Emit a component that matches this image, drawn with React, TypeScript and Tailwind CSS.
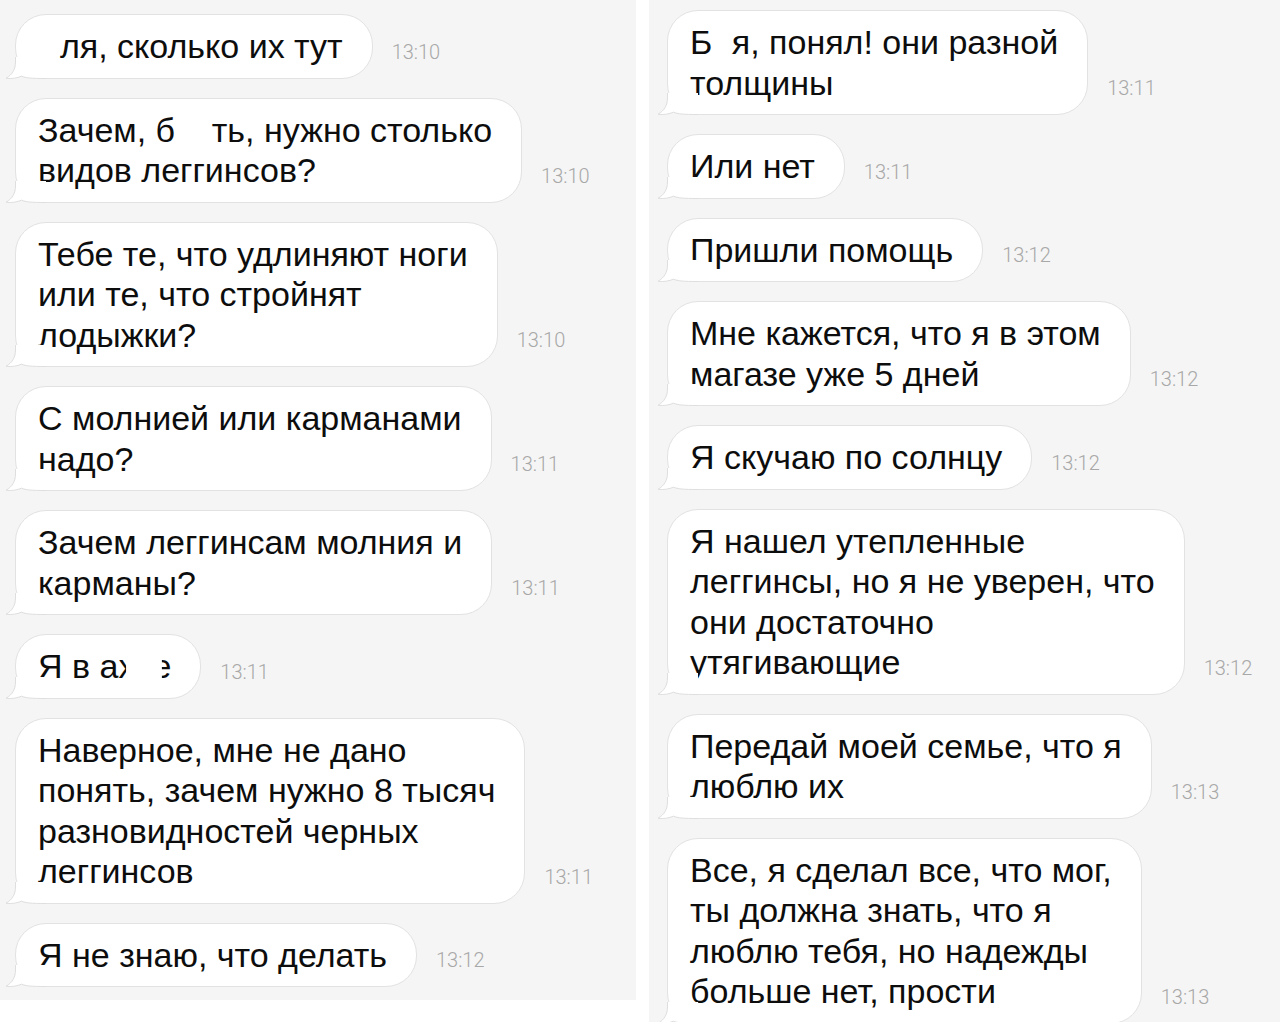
import React from "react";

function Tail() {
  return (
    <svg
      className="absolute left-[-11px] bottom-[-1px]"
      width="41"
      height="22"
      viewBox="0 0 41 22"
      fill="none"
    >
      <path
        d="M10.5 0 L10.5 5 C10.5 12 7.5 17.5 1 21.3 C7 22 12 21 16.5 19.2 C21 21 26 21.5 41 21.5 L41 0 Z"
        fill="#ffffff"
      />
      <path
        d="M10.5 0 L10.5 5 C10.5 12 7.5 17.5 1 21.3 C7 22 12 21 16.5 19.2 C21 21 26 21.5 41 21.5"
        stroke="#dedede"
        strokeWidth="1"
        fill="none"
      />
    </svg>
  );
}

function Bubble({ children, time }: { children: React.ReactNode; time: string }) {
  return (
    <div className="flex items-end">
      <div className="relative bg-white border border-[#e2e2e2] rounded-[31px] pl-[22px] pr-[29px] py-[11px] text-[34px] leading-[40.5px] text-[#0d0d0d] whitespace-nowrap font-['Liberation_Sans',Arial,sans-serif]">
        {children}
        <Tail />
      </div>
      <span className="ml-[19px] mb-[15px] text-[20px] leading-[24px] font-light text-[#a8a8a8] font-['Roboto',sans-serif]">
        {time}
      </span>
    </div>
  );
}

const W = ({ children }: { children: React.ReactNode }) => (
  <span className="text-white">{children}</span>
);

export default function App() {
  return (
    <div className="w-[1280px] h-[1022px] bg-white flex overflow-hidden">
      <div className="w-[636px] h-[1000px] bg-[#f5f5f5] pl-[15px] pt-[14px] flex flex-col gap-[19px] shrink-0">
        <Bubble time="13:10">
          <W>Б</W>ля, сколько их тут
        </Bubble>
        <Bubble time="13:10">
          Зачем, б<W>ля</W>ть, нужно столько
          <br />
          видов леггинсов?
        </Bubble>
        <Bubble time="13:10">
          Тебе те, что удлиняют ноги
          <br />
          или те, что стройнят
          <br />
          лодыжки?
        </Bubble>
        <Bubble time="13:11">
          С молнией или карманами
          <br />
          надо?
        </Bubble>
        <Bubble time="13:11">
          Зачем леггинсам молния и
          <br />
          карманы?
        </Bubble>
        <Bubble time="13:11">
          Я в а
          <span className="inline-block [clip-path:inset(0_55%_0_0)]">х</span>
          <W>у</W>
          <span className="inline-block [clip-path:inset(0_0_0_50%)]">е</span>
        </Bubble>
        <Bubble time="13:11">
          Наверное, мне не дано
          <br />
          понять, зачем нужно 8 тысяч
          <br />
          разновидностей черных
          <br />
          леггинсов
        </Bubble>
        <Bubble time="13:12">Я не знаю, что делать</Bubble>
      </div>
      <div className="w-[13px] shrink-0 bg-white" />
      <div className="flex-1 h-[1022px] bg-[#f5f5f5] pl-[18px] pt-[10px] flex flex-col gap-[19px] overflow-hidden">
        <Bubble time="13:11">
          Б<W>л</W>я, понял! они разной
          <br />
          толщины
        </Bubble>
        <Bubble time="13:11">Или нет</Bubble>
        <Bubble time="13:12">Пришли помощь</Bubble>
        <Bubble time="13:12">
          Мне кажется, что я в этом
          <br />
          магазе уже 5 дней
        </Bubble>
        <Bubble time="13:12">Я скучаю по солнцу</Bubble>
        <Bubble time="13:12">
          Я нашел утепленные
          <br />
          леггинсы, но я не уверен, что
          <br />
          они достаточно
          <br />
          утягивающие
        </Bubble>
        <Bubble time="13:13">
          Передай моей семье, что я
          <br />
          люблю их
        </Bubble>
        <Bubble time="13:13">
          Все, я сделал все, что мог,
          <br />
          ты должна знать, что я
          <br />
          люблю тебя, но надежды
          <br />
          больше нет, прости
        </Bubble>
      </div>
    </div>
  );
}
